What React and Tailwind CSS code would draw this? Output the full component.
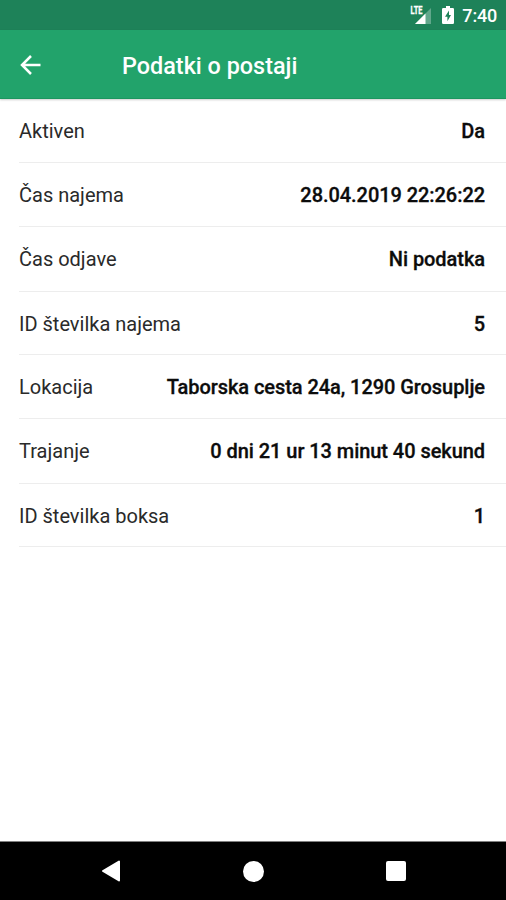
import React from 'react';

const details = [
    { label: 'Aktiven', value: 'Da', height: 'h-[64px]' },
    { label: 'Čas najema', value: '28.04.2019 22:26:22', height: 'h-[64px]' },
    { label: 'Čas odjave', value: 'Ni podatka', height: 'h-[65px]' },
    { label: 'ID številka najema', value: '5', height: 'h-[63px]' },
    { label: 'Lokacija', value: 'Taborska cesta 24a, 1290 Grosuplje', height: 'h-[64px]' },
    { label: 'Trajanje', value: '0 dni 21 ur 13 minut 40 sekund', height: 'h-[65px]' },
    { label: 'ID številka boksa', value: '1', height: 'h-[63px]' },
];

const SignalIcon = () => (
    <svg width="22" height="20" viewBox="0 0 22 20" className="shrink-0">
        <path d="M21 3v16H5z" fill="#fff" fillOpacity="0.3" />
        <path d="M15.500 8.500V19H5z" fill="#fff" />
        <text x="0.500" y="8.500" fill="#fff" stroke="#fff" strokeWidth="0.300" fontSize="10" fontWeight="700" textLength="12" lengthAdjust="spacingAndGlyphs">LTE</text>
    </svg>
);

const BatteryIcon = () => (
    <svg width="12" height="18" viewBox="0 0 12 18" className="shrink-0">
        <path d="M4 0h4v2h2.800a1.200 1.200 0 0 1 1.200 1.200v13.600a1.200 1.200 0 0 1-1.200 1.200H1.200A1.200 1.200 0 0 1 0 16.800V3.200A1.200 1.200 0 0 1 1.200 2H4z" fill="#fff" />
        <path d="M7 4.500 3 10.800h2.400V15.200L9 9H7z" fill="#1e8259" />
    </svg>
);

const StatusBar = () => (
    <div className="h-[30px] bg-[#1e8259] text-white flex items-center justify-end pr-[9px]">
        <SignalIcon />
        <div className="ml-[10px] mr-[8px]">
            <BatteryIcon />
        </div>
        <span className="text-[18px] leading-none font-medium tracking-[-0.2px] pt-px">7:40</span>
    </div>
);

const Header = () => (
    <header className="h-[69px] bg-[#22a36b] border-b border-[#1c965f] shadow-[0_1px_2px_rgba(0,0,0,0.2)] text-white flex items-center">
        <button className="ml-[20px] w-[102px] pt-[2px]" aria-label="Nazaj">
            <svg width="21" height="20" viewBox="0 0 21 20" fill="none" stroke="#fff" strokeWidth="2.500">
                <path d="M20.500 10H2M11 1 2 10l9 9" />
            </svg>
        </button>
        <h1 className="pt-[6px] text-[23.400px] leading-none font-medium whitespace-nowrap">Podatki o postaji</h1>
    </header>
);

const DetailRow = ({ item }) => (
    <div className={`ml-[19px] pr-[21px] pt-[22px] ${item.height} border-b border-[#ededed] flex items-start justify-between whitespace-nowrap text-[20px] leading-none`}>
        <span className="text-[#2a2a2a]">{item.label}</span>
        <span className="text-[#0c0c0c] font-medium tracking-[-0.06px] [-webkit-text-stroke:0.3px_#0c0c0c]">{item.value}</span>
    </div>
);

const NavBar = () => (
    <nav className="h-[59px] bg-black border-t border-[#808080] flex items-center justify-between pl-[102px] pr-[100px]">
        <svg width="19" height="22" viewBox="0 0 19 22">
            <path d="M17 1.500v19L1 11z" fill="#fff" stroke="#fff" strokeWidth="2" strokeLinejoin="round" />
        </svg>
        <div className="w-[21px] h-[21px] rounded-full bg-white"></div>
        <div className="w-[20px] h-[20px] rounded-[2px] bg-white"></div>
    </nav>
);

const App = () => {
    return (
        <div className="h-[900px] w-full bg-white flex flex-col font-[Roboto,sans-serif]">
            <StatusBar />
            <Header />
            <main className="flex-1">
                {details.map((item) => (
                    <DetailRow key={item.label} item={item} />
                ))}
            </main>
            <NavBar />
        </div>
    );
};

export default App;
